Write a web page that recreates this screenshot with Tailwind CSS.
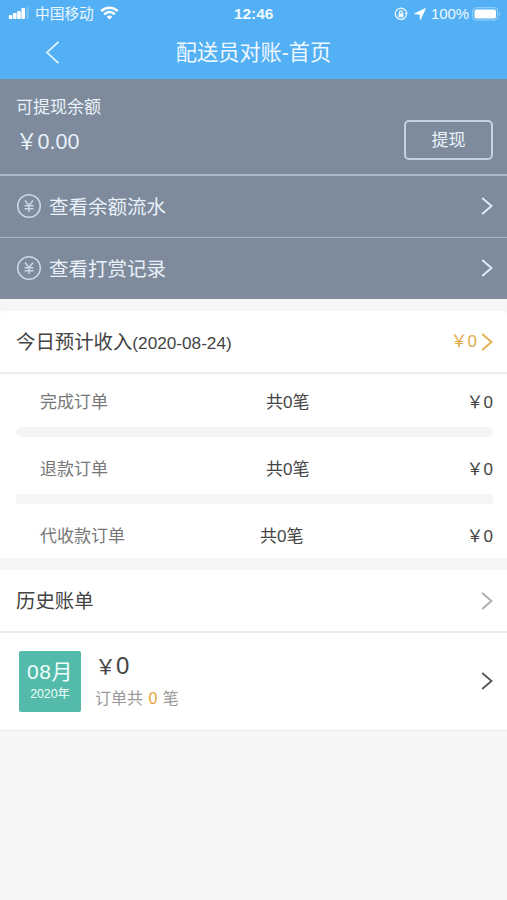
<!DOCTYPE html>
<html lang="zh-CN">
<head>
<meta charset="utf-8">
<title>配送员对账-首页</title>
<script src="https://cdn.jsdelivr.net/npm/@tailwindcss/browser@4"></script>
</head>
<body class="w-[507px] h-[900px] overflow-hidden bg-[#f6f6f6] font-['Liberation_Sans','Noto_Sans_CJK_SC',sans-serif] text-[#444] leading-none">
  <header class="h-[79px] bg-[#53b0f4] text-[#eef8ff]">
    <div class="relative h-[27px] flex items-center justify-between pl-[8px] pr-[6px] text-[15px]">
      <div class="flex items-center">
        <svg class="w-[21px] h-[12px]" viewBox="0 0 21 12" fill="#fff"><rect x="0.8" y="8" width="3.6" height="4" rx="1"/><rect x="5" y="6" width="3.6" height="6" rx="1"/><rect x="9.2" y="4" width="3.6" height="8" rx="1"/><rect x="13.4" y="1" width="3.6" height="11" rx="1"/><rect x="18" y="0" width="3" height="12" rx="1" opacity=".18"/></svg>
        <span class="ml-[6px] w-[60px] pt-[1px] text-[14.7px] whitespace-nowrap">中国移动</span>
        <svg class="ml-[5px] w-[19px] h-[14px]" viewBox="0 0 19 14" fill="none" stroke="#fff" stroke-width="2.6"><path d="M1.2 5.2C5.8.6 13.2.6 17.8 5.2"/><path d="M4.2 8.4C7.3 5.4 11.7 5.4 14.8 8.4"/><path d="M6.7 10.7Q9.5 8.4 12.3 10.7L9.5 13.6Z" fill="#fff" stroke="none"/></svg>
      </div>
      <span class="absolute left-[234px] font-bold text-[15.4px]">12:46</span>
      <div class="flex items-center">
        <svg class="w-[14px] h-[14px]" viewBox="0 0 14 14" fill="none" stroke="#eef8ff" stroke-width="1.3"><path d="M11.3 3.2A5.6 5.6 0 1 0 12.5 7.5"/><path d="M10.8 6.2L12.8 8L13.8 5.6Z" fill="#eef8ff" stroke="none"/><path d="M11 2.8Q12.4 4.3 12.5 6"/><rect x="4.5" y="6.2" width="5" height="4" rx=".5" fill="#eef8ff" stroke="none"/><path d="M5.5 6.5V5.4a1.5 1.5 0 0 1 3 0v1.1"/></svg>
        <svg class="ml-[6px] w-[12px] h-[12px]" viewBox="0 0 12 12" fill="#fff" stroke="#fff" stroke-width=".8" stroke-linejoin="round"><path d="M11.5.5L.5 5.8L6 6.2L6.4 11.5Z"/></svg>
        <span class="ml-[5px] w-[37px] text-[15px] tracking-[-0.1px] whitespace-nowrap">100%</span>
        <svg class="ml-[4px] w-[29px] h-[14px]" viewBox="0 0 29 14"><rect x=".7" y=".7" width="25" height="12.4" rx="3.6" fill="none" stroke="#9dd2fa" stroke-width="1"/><rect x="2.5" y="2.5" width="21.5" height="9" rx="2" fill="#fff"/><path d="M27.2 5q2 2 0 4z" fill="#9dd2fa"/></svg>
      </div>
    </div>
    <div class="relative h-[52px] flex items-center justify-center">
      <svg class="absolute left-[45px] top-[13px] w-[16px] h-[25px]" viewBox="0 0 16 25" fill="none" stroke="#e6f5ff" stroke-width="1.7"><path d="M13.5 1.8L2 12.5L13.5 23.2"/></svg>
      <h1 class="text-[21.2px] h-[52px] leading-[52px] whitespace-nowrap">配送员对账-首页</h1>
    </div>
  </header>

  <section class="bg-[#7e8b9c] text-[#e9f1fa]">
    <div class="h-[97px] border-b-2 border-[#adbacd] flex justify-between pl-[16px] pr-[14px]">
      <div class="pt-[20px]">
        <p class="h-[18px] leading-[18px] text-[17px]">可提现余额</p>
        <p class="mt-[14px] h-[22px] leading-[22px] text-[21.5px] whitespace-nowrap">&#xFFE5;0.00</p>
      </div>
      <button class="mt-[41px] w-[89px] h-[40px] rounded-[5px] border-2 border-[#c3d3e0] text-[17px] leading-[36px] pt-[1px]">提现</button>
    </div>
    <a class="h-[62px] border-b border-[#a9b7ca] flex items-center pl-[16px] pr-[14px]">
      <svg class="w-[26px] h-[26px] -mt-[1px]" viewBox="0 0 26 26" fill="none" stroke="#c9d8ea" stroke-width="1.5"><circle cx="13" cy="13" r="11.3"/><path d="M9 7.5L13 12.5L17 7.5M13 12.5V19M8.5 12.7H17.5M8.5 15.8H17.5"/></svg>
      <span class="ml-[7px] pt-[2px] flex-1 text-[19.5px]">查看余额流水</span>
      <svg class="w-[12px] h-[18px] -mt-[2px]" viewBox="0 0 12 18" fill="none" stroke="#e3eefb" stroke-width="1.8"><path d="M1.2 1L10.5 9L1.2 17"/></svg>
    </a>
    <a class="h-[61px] flex items-center pl-[16px] pr-[14px]">
      <svg class="w-[26px] h-[26px] -mt-[1px]" viewBox="0 0 26 26" fill="none" stroke="#c9d8ea" stroke-width="1.5"><circle cx="13" cy="13" r="11.3"/><path d="M9 7.5L13 12.5L17 7.5M13 12.5V19M8.5 12.7H17.5M8.5 15.8H17.5"/></svg>
      <span class="ml-[7px] pt-[2px] flex-1 text-[19.5px]">查看打赏记录</span>
      <svg class="w-[12px] h-[18px] -mt-[2px]" viewBox="0 0 12 18" fill="none" stroke="#e3eefb" stroke-width="1.8"><path d="M1.2 1L10.5 9L1.2 17"/></svg>
    </a>
  </section>

  <section class="mt-[12px] h-[247px] bg-white rounded-t-[4px]">
    <div class="h-[63px] border-b-2 border-[#ededed] flex items-center pl-[16px] pr-[14px]">
      <h2 class="flex-1 pt-[2px] text-[19.4px] whitespace-nowrap">今日预计收入<span class="text-[17.2px]">(2020-08-24)</span></h2>
      <span class="mr-[4px] text-[17px] text-[#e0ab45]">&#xFFE5;0</span>
      <svg class="w-[12px] h-[18px]" viewBox="0 0 12 18" fill="none" stroke="#e5b04c" stroke-width="1.8"><path d="M1.2 1L10.5 9L1.2 17"/></svg>
    </div>
    <div class="mx-[14px] text-[17px]">
      <div class="h-[53px] pl-[26px] pt-[4px] flex items-center"><span class="w-[226px] text-[#777]">完成订单</span><span class="flex-1">共0笔</span><span>&#xFFE5;0</span></div>
      <div class="ml-[2px] h-[10px] rounded-[5px] bg-[#f5f5f5]"></div>
      <div class="h-[57px] pl-[26px] pt-[8px] flex items-center"><span class="w-[226px] text-[#777]">退款订单</span><span class="flex-1">共0笔</span><span>&#xFFE5;0</span></div>
      <div class="ml-[2px] h-[10px] bg-[#f5f5f5]"></div>
      <div class="h-[54px] pl-[26px] pt-[11px] flex items-center"><span class="w-[220px] text-[#777]">代收款订单</span><span class="flex-1">共0笔</span><span>&#xFFE5;0</span></div>
    </div>
  </section>

  <section class="mt-[12px] bg-white">
    <div class="h-[63px] border-b-2 border-[#ededed] flex items-center justify-between pl-[16px] pr-[14px]">
      <h2 class="pt-[2px] text-[19.4px]">历史账单</h2>
      <svg class="w-[12px] h-[18px]" viewBox="0 0 12 18" fill="none" stroke="#aaa" stroke-width="1.7"><path d="M1.2 1L10.5 9L1.2 17"/></svg>
    </div>
    <div class="h-[98px] border-b border-[#ececec] flex items-center pl-[19px] pr-[14px]">
      <div class="w-[62px] h-[61px] rounded-[2px] bg-[#54bbaa] text-[#f0fffb] text-center">
        <p class="pt-[9px] h-[34px] leading-[24px] text-[21px] tracking-[0.5px] whitespace-nowrap">08月</p>
        <p class="h-[18px] leading-[19px] text-[12.3px] whitespace-nowrap">2020年</p>
      </div>
      <div class="ml-[14px] flex-1 h-[61px]">
        <p class="pt-[3px] h-[35px] leading-[24px] text-[24px] whitespace-nowrap"><span class="text-[21px]">&#xFFE5;</span>0</p>
        <p class="pt-[3px] h-[20px] leading-[20px] text-[16px] text-[#999] whitespace-nowrap">订单共 <span class="text-[#e6a23c] mx-[1px]">0</span> 笔</p>
      </div>
      <svg class="w-[12px] h-[18px] -mt-[2px]" viewBox="0 0 12 18" fill="none" stroke="#555" stroke-width="1.8"><path d="M1.2 1L10.5 9L1.2 17"/></svg>
    </div>
  </section>
</body>
</html>
